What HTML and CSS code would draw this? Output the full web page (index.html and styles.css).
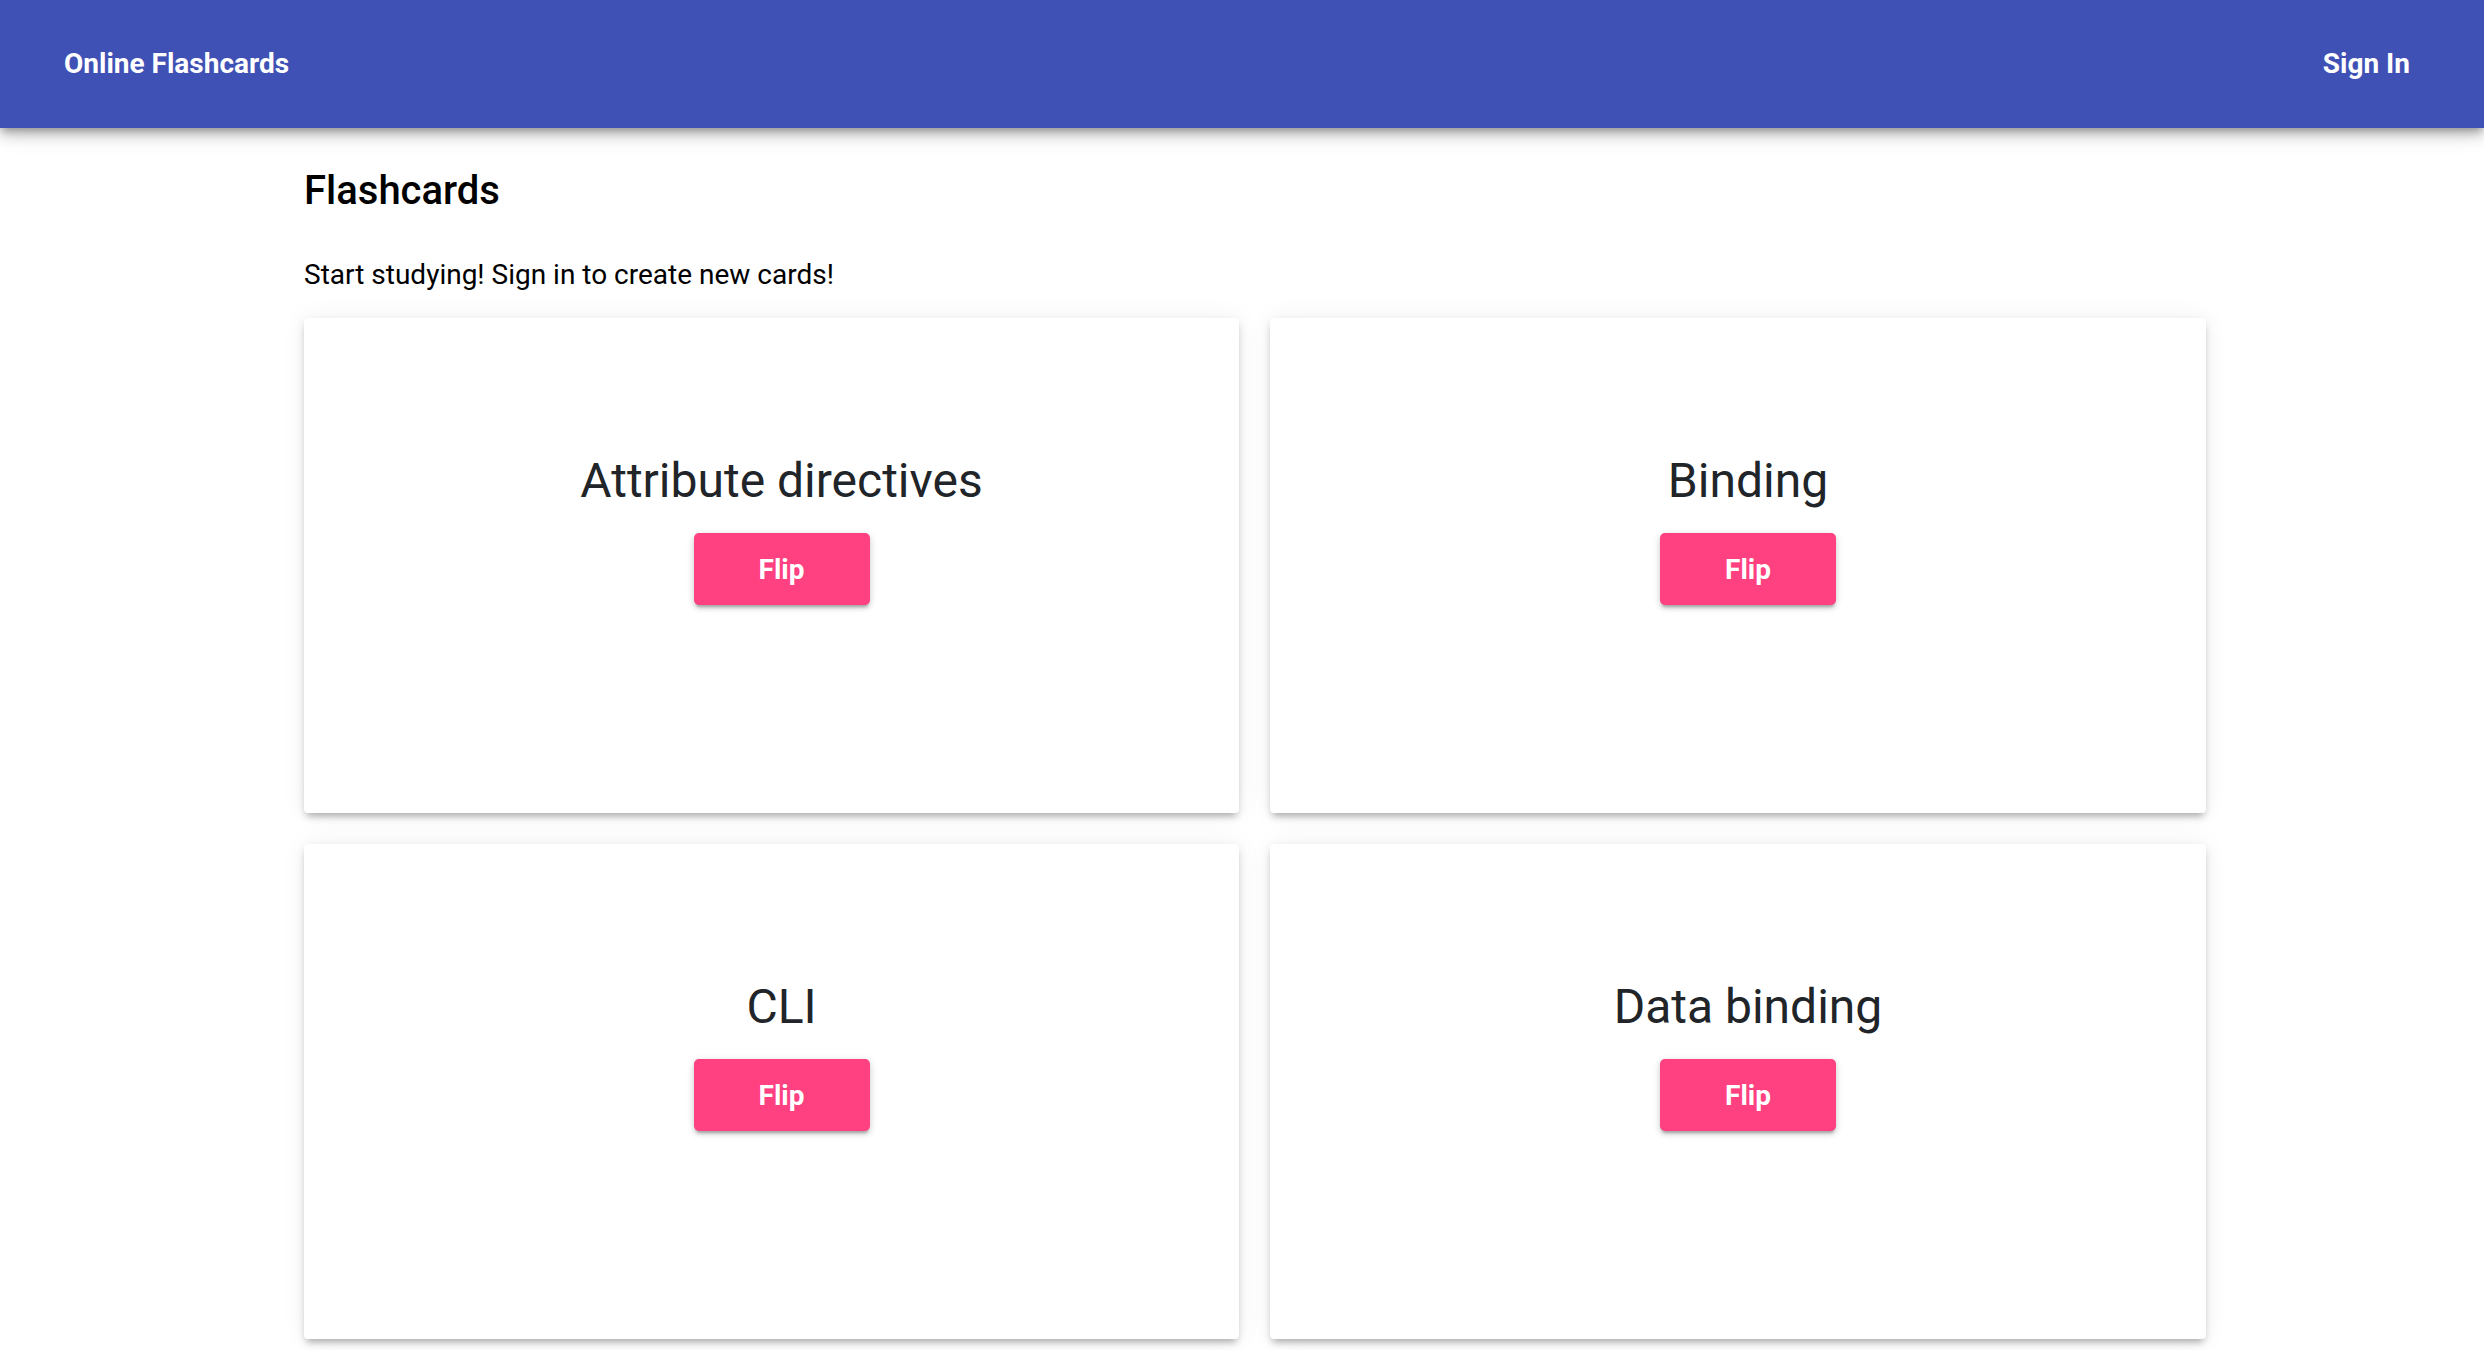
FILE: index.html
```html
<!DOCTYPE html>
<html lang="en">
<head>
<meta charset="utf-8">
<title>Online Flashcards</title>
<link rel="stylesheet" href="styles.css">
</head>
<body>
<header class="toolbar">
  <span class="brand">Online Flashcards</span>
  <span class="signin">Sign In</span>
</header>
<main class="content">
  <h1 class="page-title">Flashcards</h1>
  <p class="intro">Start studying! Sign in to create new cards!</p>
  <div class="grid">
    <div class="card">
      <h2 class="card-title">Attribute directives</h2>
      <button class="flip">Flip</button>
    </div>
    <div class="card">
      <h2 class="card-title">Binding</h2>
      <button class="flip">Flip</button>
    </div>
    <div class="card">
      <h2 class="card-title">CLI</h2>
      <button class="flip">Flip</button>
    </div>
    <div class="card">
      <h2 class="card-title">Data binding</h2>
      <button class="flip">Flip</button>
    </div>
  </div>
</main>
</body>
</html>
```

FILE: styles.css
```css
* { box-sizing: border-box; }
html, body { margin: 0; padding: 0; background: #ffffff; }
body {
  font-family: Roboto, "Noto Sans", "Liberation Sans", sans-serif;
  color: #000;
  overflow: hidden;
  height: 1350px;
}
.toolbar {
  height: 128px;
  background: #3f51b5;
  color: #fff;
  display: flex;
  align-items: center;
  justify-content: space-between;
  padding: 0 74px 0 64px;
  box-shadow: 0 4px 8px -2px rgba(0,0,0,.3), 0 8px 12px rgba(0,0,0,.16), 0 2px 26px rgba(0,0,0,.12);
  position: relative;
  z-index: 2;
}
.brand, .signin {
  font-size: 28px;
  line-height: 32px;
  font-weight: 700;
}
.content {
  padding: 39px 0 0 304px;
}
.page-title {
  margin: 0;
  font-size: 40px;
  line-height: 48px;
  font-weight: 500;
}
.intro {
  margin: 44px 0 0;
  font-size: 28px;
  line-height: 32px;
  font-weight: 400;
}
.grid {
  margin-top: 27px;
  display: grid;
  grid-template-columns: 935px 936px;
  grid-auto-rows: 495px;
  gap: 31px;
}
.card {
  background: #fff;
  border-radius: 4px;
  box-shadow: 0 6px 7px -3px rgba(0,0,0,.25), 0 3px 10px rgba(0,0,0,.09), 0 0 26px rgba(0,0,0,.06);
  display: flex;
  flex-direction: column;
  align-items: center;
  padding: 134px 0 0 20px;
}
.card-title {
  margin: 0;
  font-size: 48px;
  line-height: 58px;
  font-weight: 400;
  color: #212529;
}
.flip {
  margin-top: 23px;
  width: 176px;
  height: 72px;
  border: none;
  border-radius: 5px;
  background: #ff4081;
  color: #fff;
  font-family: Roboto, "Noto Sans", "Liberation Sans", sans-serif;
  font-size: 28px;
  font-weight: 700;
  padding: 0;
  box-shadow: 0 4px 3px -2px rgba(0,0,0,.25), 0 3px 6px rgba(0,0,0,.14), 0 1px 10px rgba(0,0,0,.08);
}
```
